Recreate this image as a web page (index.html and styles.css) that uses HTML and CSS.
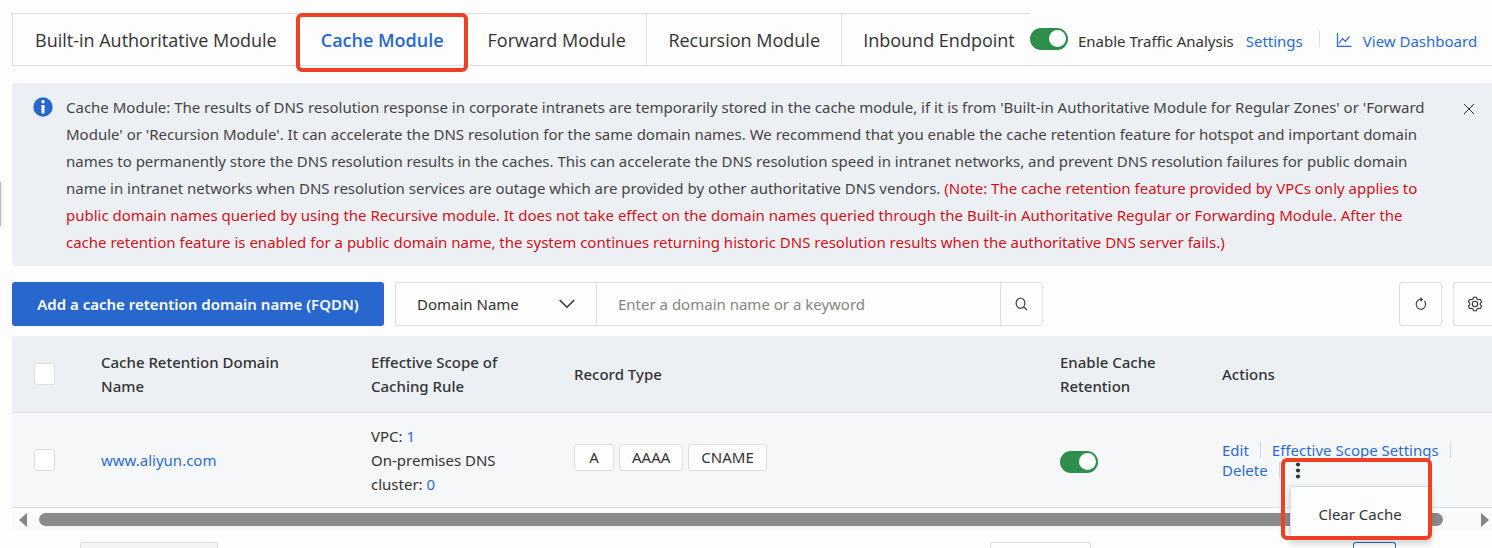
FILE: index.html
```html
<!DOCTYPE html>
<html lang="en">
<head>
<meta charset="utf-8">
<title>Cache Module</title>
<link rel="stylesheet" href="styles.css">
</head>
<body>
<div class="drawer-handle"></div>
<main class="page">
  <header class="tabbar">
    <nav class="tabs">
      <button class="tab" type="button">Built-in Authoritative Module</button>
      <button class="tab tab-active" type="button">Cache Module<span class="callout callout-tab"></span></button>
      <button class="tab" type="button">Forward Module</button>
      <button class="tab" type="button">Recursion Module</button>
      <button class="tab" type="button">Inbound Endpoint</button>
    </nav>
    <div class="tab-extra">
      <input class="switch" type="checkbox" id="traffic" checked>
      <label class="switch-label" for="traffic">Enable Traffic Analysis</label>
      <a class="link link-settings" href="#">Settings</a>
      <span class="divider"></span>
      <a class="link link-dashboard" href="#">
        <svg width="16" height="16" viewBox="0 0 16 16" fill="none" stroke="currentColor" stroke-width="1.3"><path d="M1.5 0v13.3H15.5"/><path d="M3 10.5 6.5 5.500 9.300 8.400 13.500 3.500"/></svg>
        View Dashboard</a>
    </div>
  </header>

  <section class="notice">
    <svg class="notice-icon" width="20" height="20" viewBox="0 0 20 20"><circle cx="10" cy="10" r="9.700" fill="#2767ce"/><circle cx="10" cy="4.800" r="1.700" fill="#fff"/><rect x="8.500" y="8" width="3" height="8.500" rx=".4" fill="#fff"/></svg>
    <p class="notice-text">Cache Module: The results of DNS resolution response in corporate intranets are temporarily stored in the cache module, if it is from 'Built-in Authoritative Module for Regular Zones' or 'Forward<br>Module' or 'Recursion Module'. It can accelerate the DNS resolution for the same domain names. We recommend that you enable the cache retention feature for hotspot and important domain<br>names to permanently store the DNS resolution results in the caches. This can accelerate the DNS resolution speed in intranet networks, and prevent DNS resolution failures for public domain<br>name in intranet networks when DNS resolution services are outage which are provided by other authoritative DNS vendors. <span class="notice-warn">(Note: The cache retention feature provided by VPCs only applies to<br>public domain names queried by using the Recursive module. It does not take effect on the domain names queried through the Built-in Authoritative Regular or Forwarding Module. After the<br>cache retention feature is enabled for a public domain name, the system continues returning historic DNS resolution results when the authoritative DNS server fails.)</span></p>
    <button class="notice-close" type="button" aria-label="Close"><svg width="12" height="12" viewBox="0 0 12 12" fill="none" stroke="currentColor" stroke-width="1"><path d="M1 1l10 10M11 1 1 11"/></svg></button>
  </section>

  <div class="toolbar">
    <button class="primary" type="button">Add a cache retention domain name (FQDN)</button>
    <form class="search">
      <div class="select-wrap">
        <select class="select" aria-label="Search field"><option>Domain Name</option></select>
        <svg class="chevron" width="16" height="10" viewBox="0 0 16 10" fill="none" stroke="#333" stroke-width="1.600"><path d="M.8 1 8 8.200 15.200 1"/></svg>
      </div>
      <input class="search-input" type="text" placeholder="Enter a domain name or a keyword" aria-label="Keyword">
      <button class="search-button" type="button" aria-label="Search"><svg width="14" height="14" viewBox="0 0 14 14" fill="none" stroke="currentColor" stroke-width="1.100"><ellipse cx="5.500" cy="6.200" rx="4.400" ry="5.200"/><path d="M8.700 9.800 12 13"/></svg></button>
    </form>
    <button class="tool tool-refresh" type="button" aria-label="Refresh"><svg width="14" height="14" viewBox="0 0 14 14" fill="none" stroke="currentColor" stroke-width="1.100"><path d="M10.400 4A4.700 5 0 1 1 5.500 2.500H8"/><path d="M6.300.6 8.300 2.500 6.500 4.300"/></svg></button>
    <button class="tool tool-settings" type="button" aria-label="Table settings"><svg width="16" height="16" viewBox="0 0 16 16" fill="none" stroke="currentColor" stroke-width="1.100" stroke-linejoin="round"><path d="M6.500 1.200h3l.5 1.900 1.300.7 1.900-.6 1.500 2.600-1.400 1.400v1.600l1.400 1.400-1.500 2.600-1.900-.6-1.300.7-.5 1.900h-3L6 12.900l-1.300-.7-1.900.6-1.500-2.600L2.700 8.800V7.200L1.300 5.800l1.500-2.600 1.900.6L6 3.100z"/><circle cx="8" cy="8" r="2.700"/></svg></button>
  </div>

  <table class="grid">
    <colgroup><col class="c-check"><col class="c-name"><col class="c-scope"><col><col class="c-enable"><col class="c-actions"></colgroup>
    <thead>
      <tr>
        <th><input class="check" type="checkbox" aria-label="Select all"></th>
        <th>Cache Retention Domain<br>Name</th>
        <th>Effective Scope of<br>Caching Rule</th>
        <th>Record Type</th>
        <th>Enable Cache<br>Retention</th>
        <th>Actions</th>
      </tr>
    </thead>
    <tbody>
      <tr>
        <td><input class="check" type="checkbox" aria-label="Select www.aliyun.com"></td>
        <td><a class="link" href="#">www.aliyun.com</a></td>
        <td>VPC: <a class="link" href="#">1</a><br>On-premises DNS<br>cluster: <a class="link" href="#">0</a></td>
        <td><div class="tags"><span class="tag">A</span><span class="tag">AAAA</span><span class="tag">CNAME</span></div></td>
        <td class="cell-switch"><input class="switch" type="checkbox" aria-label="Enable cache retention" checked></td>
        <td>
          <div class="actions">
            <div class="action-line"><a class="link" href="#">Edit</a><span class="bar"></span><a class="link" href="#">Effective Scope Settings</a><span class="bar"></span></div>
            <div class="action-line"><a class="link" href="#">Delete</a><span class="bar"></span>
              <div class="more">
                <button class="more-button" type="button" aria-label="More"><svg width="6" height="18" viewBox="0 0 6 18" fill="#333"><circle cx="3" cy="3.500" r="2.100"/><circle cx="3" cy="9.500" r="2.100"/><circle cx="3" cy="15.500" r="2.100"/></svg></button>
                <div class="menu"><button class="menu-item" type="button">Clear Cache</button></div>
                <span class="callout callout-menu"></span>
              </div>
            </div>
          </div>
        </td>
      </tr>
    </tbody>
  </table>

  <div class="scrollbar">
    <svg width="8" height="14" viewBox="0 0 8 14" fill="#858585"><path d="M8 0v14L0 7z"/></svg>
    <span class="thumb"></span>
    <svg width="8" height="14" viewBox="0 0 8 14" fill="#858585"><path d="M0 0v14l8-7z"/></svg>
  </div>

  <footer class="pager">
    <span class="pager-batch"></span>
    <span class="pager-size"></span>
    <span class="pager-current"></span>
  </footer>
</main>
</body>
</html>
```
FILE: styles.css
```css
* { box-sizing: border-box; }

html, body { height: 100%; }

body {
  margin: 0;
  background: #fdfdfd;
  color: #333;
  font-family: "Noto Sans", "Open Sans", sans-serif;
  font-size: 15px;
}

button, input, select { font: inherit; color: inherit; margin: 0; }
button { background: none; border: 0; padding: 0; }
svg { display: block; flex: none; }

.link { color: #2a6bd2; text-decoration: none; }

.page {
  display: flex;
  flex-direction: column;
  height: 100%;
  padding: 13px 0 0 12px;
}

.drawer-handle {
  position: absolute;
  left: 0;
  top: 182px;
  width: 1px;
  height: 44px;
  background: #b9bcc6;
  box-shadow: 0 1px 3px #0004;
}

/* Tabs */
.tabbar {
  display: flex;
  flex: none;
  height: 53px;
  border-bottom: 1px solid #dedede;
}
.tabs {
  flex: 1;
  display: grid;
  grid-template-columns: 285fr 169fr 181fr 195fr 188fr;
  border-top: 1px solid #dedede;
  border-left: 1px solid #dedede;
}
.tab {
  position: relative;
  padding: 0 0 0 21px;
  border-right: 1px solid #dedede;
  font-family: "Open Sans", "Noto Sans", sans-serif;
  font-size: 18px;
  text-align: left;
  white-space: nowrap;
}
.tab:first-child { padding-left: 22px; }
.tab:last-child { border-right: 0; }
.tab-active { padding-left: 23px; color: #2767ce; font-weight: 600; }

.callout {
  position: absolute;
  border: 4px solid #ee4026;
  border-radius: 6px;
  pointer-events: none;
}
.callout-tab { inset: -1px -2px -7px -2px; }

.tab-extra {
  width: 462px;
  display: flex;
  align-items: center;
  white-space: nowrap;
}
.switch-label { margin: 0 12px 0 10px; padding-top: 3px; }
.link-settings, .link-dashboard { padding-top: 3px; }
.divider { width: 1px; height: 16px; margin: 0 16px; background: #dedede; }
.link-dashboard { display: flex; align-items: center; gap: 11px; }

.switch {
  appearance: none;
  display: block;
  flex: none;
  width: 38px;
  height: 22px;
  padding: 2px;
  border-radius: 11px;
  background: #2d8f4b;
}
.switch::before {
  content: "";
  display: block;
  width: 17px;
  height: 17px;
  margin-left: auto;
  border-radius: 50%;
  background: #fff;
}

/* Notice */
.notice {
  display: flex;
  flex: none;
  align-items: flex-start;
  margin-top: 17px;
  padding: 11px 17px 10px 21px;
  border-radius: 4px 0 0 4px;
  background: #ecf0f5;
}
.notice-icon { margin-top: 3px; }
.notice-text {
  flex: 1;
  margin: 0 0 0 13px;
  color: #444;
  line-height: 27px;
  white-space: nowrap;
}
.notice-warn { color: #d0121b; }
.notice-close { margin-top: 9px; }

/* Toolbar */
.toolbar { display: flex; flex: none; height: 44px; margin: 16px 0 10px; }
.primary {
  width: 372px;
  border-radius: 3px;
  background: #2767ce;
  color: #fff;
  font-weight: 600;
  white-space: nowrap;
}
.search {
  display: flex;
  width: 648px;
  margin: 0 auto 0 11px;
  border: 1px solid #dedede;
  border-radius: 3px;
}
.select-wrap { display: grid; width: 200px; align-items: center; }
.select, .chevron { grid-area: 1 / 1; }
.select {
  appearance: none;
  height: 100%;
  padding: 0 21px;
  border: 0;
  background: none;
}
.chevron { justify-self: end; margin-right: 21px; pointer-events: none; }
.search-input {
  flex: 1;
  min-width: 0;
  padding: 0 21px;
  border: 1px solid #dedede;
  border-width: 0 1px;
  background: none;
}
.search-input::placeholder { color: #858585; opacity: 1; }
.search-button { display: grid; width: 41px; place-content: center; }
.tool {
  display: grid;
  width: 43px;
  place-content: center;
  border: 1px solid #dedede;
  border-radius: 3px;
}
.tool-settings {
  width: 39px;
  margin-left: 11px;
  padding-left: 3px;
  border-right: 0;
  border-radius: 3px 0 0 3px;
}

/* Table */
.grid {
  flex: none;
  width: 100%;
  table-layout: fixed;
  border-spacing: 0;
  line-height: 24px;
}
.c-check { width: 67px; }
.c-name { width: 270px; }
.c-scope { width: 203px; }
.c-enable { width: 162px; }
.c-actions { width: 292px; }
.grid th, .grid td {
  padding: 0 0 0 22px;
  border-bottom: 1px solid #dedede;
  text-align: left;
  white-space: nowrap;
}
.grid th { height: 77px; background: #ecf0f5; font-weight: 500; }
.grid th:first-child { border-radius: 4px 0 0 0; }
.grid td { height: 95px; background: #f6f7f9; }
.grid .cell-switch { padding-top: 4px; }

.check {
  appearance: none;
  display: block;
  width: 21px;
  height: 22px;
  border: 1px solid #dedede;
  border-radius: 3px;
  background: #fff;
}

.tags { display: flex; gap: 5px; padding-bottom: 6px; }
.tag {
  min-width: 40px;
  padding: 0 12px;
  border: 1px solid #dedede;
  border-radius: 3px;
  background: #fdfdfd;
  line-height: 25px;
  text-align: center;
}

.actions { line-height: 20px; }
.action-line { display: flex; align-items: center; }
.bar { width: 1px; height: 16px; margin: 0 11px; background: #d4d4d8; }
.more { position: relative; }
.more-button { display: block; padding: 0 4px; }
.menu {
  position: absolute;
  left: -1px;
  top: 25px;
  width: 141px;
  height: 55px;
  border: 1px solid #dedede;
  border-radius: 2px;
  background: #fdfdfd;
  box-shadow: 0 2px 6px #0003;
}
.menu-item { width: 100%; height: 100%; }
.callout-menu { left: -10px; top: -3px; width: 151px; height: 82px; }

/* Horizontal scroll strip */
.scrollbar {
  display: flex;
  flex: none;
  align-items: center;
  gap: 12px;
  height: 23px;
  padding: 0 3px 0 7px;
  background: #fafafa;
}
.thumb { flex: 1; height: 13px; margin-right: 26px; border-radius: 7px; background: #8a8a8a; }

/* Pager */
.pager { display: flex; flex: 1; min-height: 0; padding: 11px 96px 0 68px; }
.pager-batch, .pager-size, .pager-current {
  border: 1px solid #dedede;
  border-bottom: 0;
  border-radius: 3px 3px 0 0;
}
.pager-batch { width: 138px; margin-right: auto; background: #f4f4f4; }
.pager-size { width: 101px; }
.pager-current { width: 43px; margin-left: 262px; border-color: #2767ce; }
```
